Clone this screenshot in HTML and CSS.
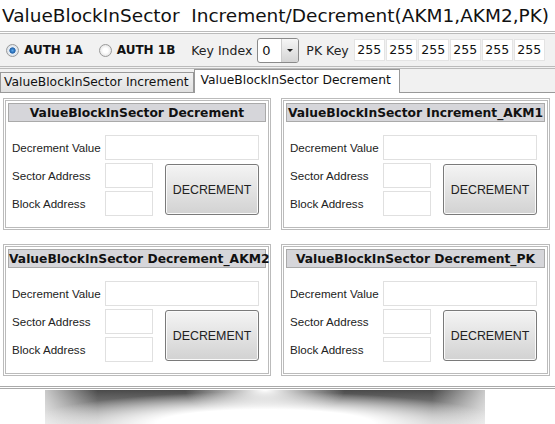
FILE: index.html
```html
<!DOCTYPE html>
<html lang="en">

<head>
    <meta charset="UTF-8">
    <title>ValueBlockInSector Increment/Decrement</title>
    <link rel="stylesheet" href="styles.css">
</head>

<body>
    <div class="window">
        <h1 class="title">ValueBlockInSector&nbsp; Increment/Decrement(AKM1,AKM2,PK)</h1>

        <div class="toolbar">
            <label class="radio"><span class="dot checked"></span>AUTH 1A</label>
            <label class="radio"><span class="dot"></span>AUTH 1B</label>
            <span class="lbl">Key Index</span>
            <div class="select">
                <span class="val">0</span>
                <span class="arrow"></span>
            </div>
            <span class="lbl">PK Key</span>
            <div class="keys">
                <div class="key">255</div>
                <div class="key">255</div>
                <div class="key">255</div>
                <div class="key">255</div>
                <div class="key">255</div>
                <div class="key">255</div>
            </div>
        </div>

        <div class="tabs">
            <div class="tab">ValueBlockInSector Increment</div>
            <div class="tab active">ValueBlockInSector Decrement</div>
        </div>

        <div class="panel">
            <div class="group">
                <div class="group-head">ValueBlockInSector Decrement</div>
                <div class="group-body">
                    <span>Decrement Value</span><div class="inp wide"></div>
                    <span>Sector Address</span><div class="inp"></div>
                    <span>Block Address</span><div class="inp"></div>
                    <button class="btn">DECREMENT</button>
                </div>
            </div>
            <div class="group">
                <div class="group-head">ValueBlockInSector Increment_AKM1</div>
                <div class="group-body">
                    <span>Decrement Value</span><div class="inp wide"></div>
                    <span>Sector Address</span><div class="inp"></div>
                    <span>Block Address</span><div class="inp"></div>
                    <button class="btn">DECREMENT</button>
                </div>
            </div>
            <div class="group">
                <div class="group-head">ValueBlockInSector Decrement_AKM2</div>
                <div class="group-body">
                    <span>Decrement Value</span><div class="inp wide"></div>
                    <span>Sector Address</span><div class="inp"></div>
                    <span>Block Address</span><div class="inp"></div>
                    <button class="btn">DECREMENT</button>
                </div>
            </div>
            <div class="group">
                <div class="group-head">ValueBlockInSector Decrement_PK</div>
                <div class="group-body">
                    <span>Decrement Value</span><div class="inp wide"></div>
                    <span>Sector Address</span><div class="inp"></div>
                    <span>Block Address</span><div class="inp"></div>
                    <button class="btn">DECREMENT</button>
                </div>
            </div>
        </div>
    </div>
    <div class="shadow"></div>
</body>

</html>
```

FILE: styles.css
```css
body {
    margin: 0;
    background-color: #fff;
    font-family: "DejaVu Sans", Verdana, sans-serif;
    color: #111;
    width: 555px;
    height: 424px;
    overflow: hidden;
}

.window {
    border-bottom: 3px double #aaa;
}

.title {
    margin: 0;
    height: 34px;
    padding: 3px 0 0 2px;
    font-size: 18.5px;
    font-weight: normal;
    line-height: 26px;
    white-space: nowrap;
    border-bottom: 3px double #bbb;
    box-sizing: border-box;
}

.toolbar {
    display: flex;
    align-items: center;
    height: 32px;
    padding-left: 6px;
    background-color: #f1f1f1;
    border-bottom: 3px double #bbb;
    font-size: 12.5px;
}

.radio {
    display: flex;
    align-items: center;
    gap: 5px;
    font-weight: bold;
    font-size: 12px;
    margin-right: 16px;
}

.dot {
    width: 13px;
    height: 13px;
    border-radius: 50%;
    border: 1px solid #9a9a9a;
    background: radial-gradient(circle, #fff 30%, #d8d8d8 100%);
    box-sizing: border-box;
}

.dot.checked {
    background: radial-gradient(circle, #5aa6ea 0, #1d5fa8 35%, #e8eef5 45%, #cfd6de 100%);
}

.lbl {
    margin: 0 5px 0 0;
    color: #222;
}

.select {
    display: flex;
    width: 42px;
    height: 25px;
    border: 1px solid #8a8a8a;
    border-radius: 3px;
    box-sizing: border-box;
    background-color: #fff;
    margin-right: 7px;
}

.select .val {
    flex: 1;
    padding-left: 4px;
    line-height: 23px;
    font-size: 13px;
}

.select .arrow {
    width: 16px;
    background: linear-gradient(#f6f6f6, #d4d4d4);
    border-left: 1px solid #ccc;
    border-radius: 0 2px 2px 0;
    position: relative;
}

.select .arrow::after {
    content: "";
    position: absolute;
    left: 5px;
    top: 10px;
    border-left: 3px solid transparent;
    border-right: 3px solid transparent;
    border-top: 3px solid #222;
}

.keys {
    display: flex;
    gap: 1px;
}

.key {
    width: 31px;
    height: 22px;
    line-height: 19px;
    text-align: center;
    background-color: #fff;
    border: 1px solid #e4e4e4;
    box-sizing: border-box;
    font-size: 12.5px;
}

.tabs {
    display: flex;
    align-items: flex-end;
    height: 23px;
    background-color: #f1f1f1;
    border-bottom: 1px solid #999;
    font-size: 12.3px;
}

.tab {
    height: 20px;
    line-height: 19px;
    padding: 0 4px 0 3px;
    background: linear-gradient(#f2f2f2, #e0e0e0);
    border: 1px solid #999;
    border-bottom: none;
    box-sizing: border-box;
    margin-right: 0;
}

.tab.active {
    height: 24px;
    line-height: 20px;
    padding: 0 8px 0 6px;
    background: #fff;
    margin-bottom: -1px;
}

.panel {
    display: grid;
    grid-template-columns: 268px 269px;
    column-gap: 10px;
    row-gap: 14px;
    padding: 5px 0 10px 3px;
    background-color: #fff;
}

.group {
    height: 132px;
    border: 3px double #bbb;
    box-sizing: border-box;
    padding: 2px;
}

.group-head {
    height: 19px;
    line-height: 18px;
    text-align: center;
    font-weight: bold;
    font-size: 12.3px;
    background-color: #d6d6da;
    border: 1px solid #aaa;
    box-sizing: border-box;
    white-space: nowrap;
}

.group-body {
    display: grid;
    grid-template-columns: 93px 48px 106px;
    grid-template-rows: 25px 25px 25px;
    row-gap: 3px;
    align-items: center;
    padding: 13px 0 0 4px;
    font-family: "Liberation Sans", Arial, sans-serif;
    font-size: 11.6px;
    color: #222;
}

.inp {
    height: 25px;
    border: 1px solid #e0e0e0;
    box-sizing: border-box;
}

.inp.wide {
    grid-column: 2 / 4;
}

.btn {
    grid-column: 3;
    grid-row: 2 / 4;
    justify-self: end;
    width: 94px;
    height: 51px;
    border: 1px solid #7a7a7a;
    border-radius: 3px;
    background: linear-gradient(#f4f4f4, #d2d2d2);
    font-family: "Liberation Sans", Arial, sans-serif;
    font-size: 12.4px;
    color: #222;
    box-shadow: inset 0 0 0 1px #fafafa;
}

.shadow {
    width: 440px;
    height: 34px;
    margin: 1px 0 0 45px;
    background:
        radial-gradient(ellipse 80px 30px at 50% 0, #fff 0, rgba(255, 255, 255, 0) 100%),
        radial-gradient(ellipse 55% 95% at 50% 100%, #fff 45%, rgba(255, 255, 255, 0) 100%),
        linear-gradient(90deg, rgba(255, 255, 255, 0.7) 0, rgba(255, 255, 255, 0) 12%, rgba(255, 255, 255, 0) 88%, rgba(255, 255, 255, 0.7) 100%),
        linear-gradient(#4a4a4a, #b5b5b5);
}
```
